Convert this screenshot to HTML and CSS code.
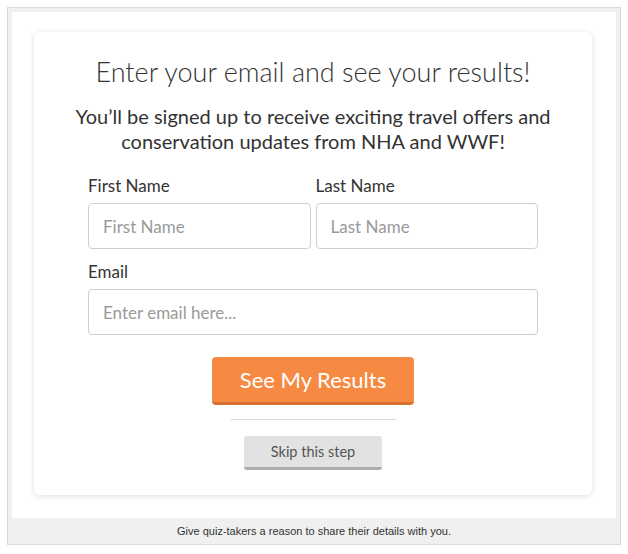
FILE: index.html
```html
<!DOCTYPE html>
<html lang="en">
<head>
    <meta charset="UTF-8">
    <meta name="viewport" content="width=device-width, initial-scale=1.0">
    <title>Lead capture</title>
    <link rel="stylesheet" href="styles.css">
</head>
<body>
    <div class="frame">
        <div class="stage">
            <div class="card">
                <h1 class="title">Enter your email and see your results!</h1>
                <p class="sub">You’ll be signed up to receive exciting travel offers and<br>conservation updates from NHA and WWF!</p>
                <form class="form">
                    <div class="row">
                        <div class="field">
                            <label for="first">First Name</label>
                            <input id="first" type="text" placeholder="First Name">
                        </div>
                        <div class="field">
                            <label for="last">Last Name</label>
                            <input id="last" type="text" placeholder="Last Name">
                        </div>
                    </div>
                    <div class="field email">
                        <label for="email">Email</label>
                        <input id="email" type="email" placeholder="Enter email here...">
                    </div>
                    <button class="go" type="button">See My Results</button>
                    <hr class="rule">
                    <button class="skip" type="button">Skip this step</button>
                </form>
            </div>
        </div>
        <div class="foot">Give quiz-takers a reason to share their details with you.</div>
    </div>
</body>
</html>
```
FILE: styles.css
```css
*{box-sizing: border-box;}
body{margin: 0;background: #fff;font-family: Lato, "Open Sans", sans-serif;color: #333;}

.frame{
    margin: 7px 0 0 7px;
    width: 614px;
    border: 1px solid #dadada;
    background: #f0f0f0;
    padding: 4px 4px 0 4px;
}
.stage{background: #fff;padding: 20px 24px 23px 22px;}
.card{
    background: #fff;
    border-radius: 6px;
    box-shadow: 0 1px 6px rgba(0,0,0,0.13);
    padding: 24px 54px 25px;
    text-align: center;
}
.title{margin: 0 0 16px;font-size: 27px;line-height: 32px;font-weight: 300;color: #333;}
.sub{margin: 0 -40px 22px;font-size: 20px;line-height: 25px;font-weight: 400;color: #333;}

.form{display: flex;flex-direction: column;align-items: center;}
.row{display: flex;gap: 5px;width: 100%;}
.field{flex: 1;text-align: left;}
.field label{display: block;font-size: 17px;line-height: 20px;margin-bottom: 7px;color: #333;}
.field input{
    display: block;width: 100%;height: 46px;
    border: 1px solid #cfcfcf;border-radius: 4px;
    padding: 0 14px;font: inherit;font-size: 17px;color: #333;
}
.field input::placeholder{color: #9a9a9a;}
.email{width: 100%;margin-top: 13px;}

.go{
    margin-top: 22px;width: 202px;height: 48px;
    background: #f68a42;color: #fff;border: 0;border-bottom: 3px solid #d8712f;
    border-radius: 4px;font: inherit;font-size: 22px;
}
.rule{width: 166px;margin: 14px 0 16px;border: 0;border-top: 1px solid #dedede;}
.skip{
    width: 138px;height: 34px;
    background: #e2e2e2;color: #555;border: 0;border-bottom: 3px solid #acacac;
    border-radius: 3px;font: inherit;font-size: 14.5px;
}

.foot{height: 26px;line-height: 26px;text-align: center;font-family: "Liberation Sans", Arial, sans-serif;font-size: 11px;color: #333;}
```
